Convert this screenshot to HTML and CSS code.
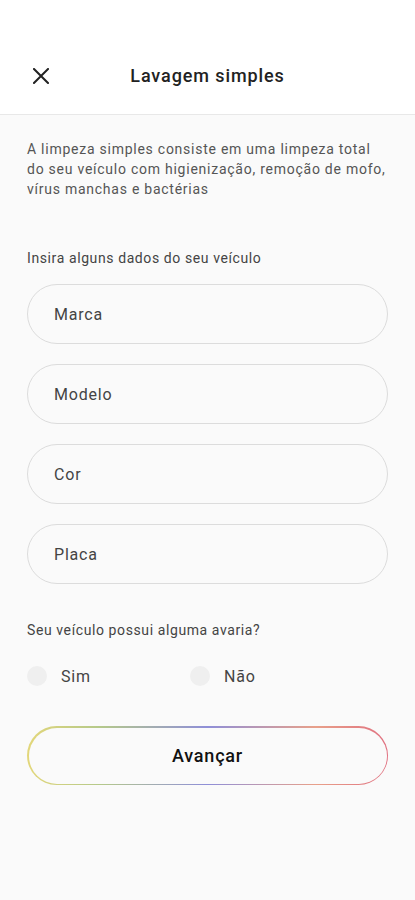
FILE: index.html
```html
<!DOCTYPE html>
<html>
<head>
<meta name="viewport" content="width=415">
<link rel="stylesheet" href="styles.css">
</head>
<body>
<div class="header">
  <button class="close" aria-label="Fechar">
    <svg width="16" height="16" viewBox="0 0 16 16"><path d="M1 1L15 15M15 1L1 15" stroke="#222" stroke-width="2" stroke-linecap="square"/></svg>
  </button>
  <h1>Lavagem simples</h1>
</div>
<div class="content">
  <p class="intro">A limpeza simples consiste em uma limpeza total do seu veículo com higienização, remoção de mofo, vírus manchas e bactérias</p>
  <p class="label">Insira alguns dados do seu veículo</p>
  <div class="fields">
    <input type="text" placeholder="Marca">
    <input type="text" placeholder="Modelo">
    <input type="text" placeholder="Cor">
    <input type="text" placeholder="Placa">
  </div>
  <p class="label question">Seu veículo possui alguma avaria?</p>
  <div class="radios">
    <label class="radio"><span class="dot"></span>Sim</label>
    <label class="radio"><span class="dot"></span>Não</label>
  </div>
  <div class="next"><button>Avançar</button></div>
</div>
</body>
</html>
```

FILE: styles.css
```css
html, body, h1, p, button, input {margin: 0; padding: 0;}
body {background-color: #fafafa; font-family: Roboto, "Liberation Sans", sans-serif; color: #333;}
.header {position: relative; height: 115px; background: #fff; border-bottom: 1px solid #e8e8e8; display: flex; align-items: center; justify-content: center; box-sizing: border-box; padding-top: 36px;}
.header h1 {font-size: 18px; font-weight: 500; color: #222; letter-spacing: 0.9px;}
.close {position: absolute; left: 33px; top: 68px; width: 16px; height: 16px; border: 0; background: none; display: block;}
.close svg {display: block;}
.content {padding: 24px 27px 0 27px;}
.intro {font-size: 14px; line-height: 20px; color: #555; letter-spacing: 0.75px;}
.label {font-size: 14px; line-height: 20px; color: #444; margin-top: 49px; letter-spacing: 0.6px;}
.fields {display: flex; flex-direction: column; gap: 20px; margin-top: 16px;}
.fields input {width: 361px; height: 60px; box-sizing: border-box; border: 1px solid #dcdcdc; border-radius: 30px; background: #fafafa; padding-left: 26px; font-family: Roboto, "Liberation Sans", sans-serif; font-size: 16px; letter-spacing: 0.8px; outline: none;}
.fields input::placeholder {color: #444;}
.question {margin-top: 36px;}
.radios {display: flex; margin-top: 26px;}
.radio {display: flex; align-items: center; width: 163px; font-size: 16px; color: #444; letter-spacing: 0.8px;}
.dot {width: 20px; height: 20px; border-radius: 50%; background: #efefef; margin-right: 14px;}
.next {margin-top: 40px; width: 361px; height: 59px; border-radius: 30px; padding: 1.5px; box-sizing: border-box; background: linear-gradient(90deg, #e3d77a 0%, #b5c98a 20%, #8f8fd8 50%, #e8a08a 80%, #e07080 100%);}
.next button {display: block; width: 100%; height: 100%; border: 0; border-radius: 29px; background: #fafafa; font-family: Roboto, "Liberation Sans", sans-serif; font-size: 18px; font-weight: 500; color: #111; letter-spacing: 0.8px;}
```
